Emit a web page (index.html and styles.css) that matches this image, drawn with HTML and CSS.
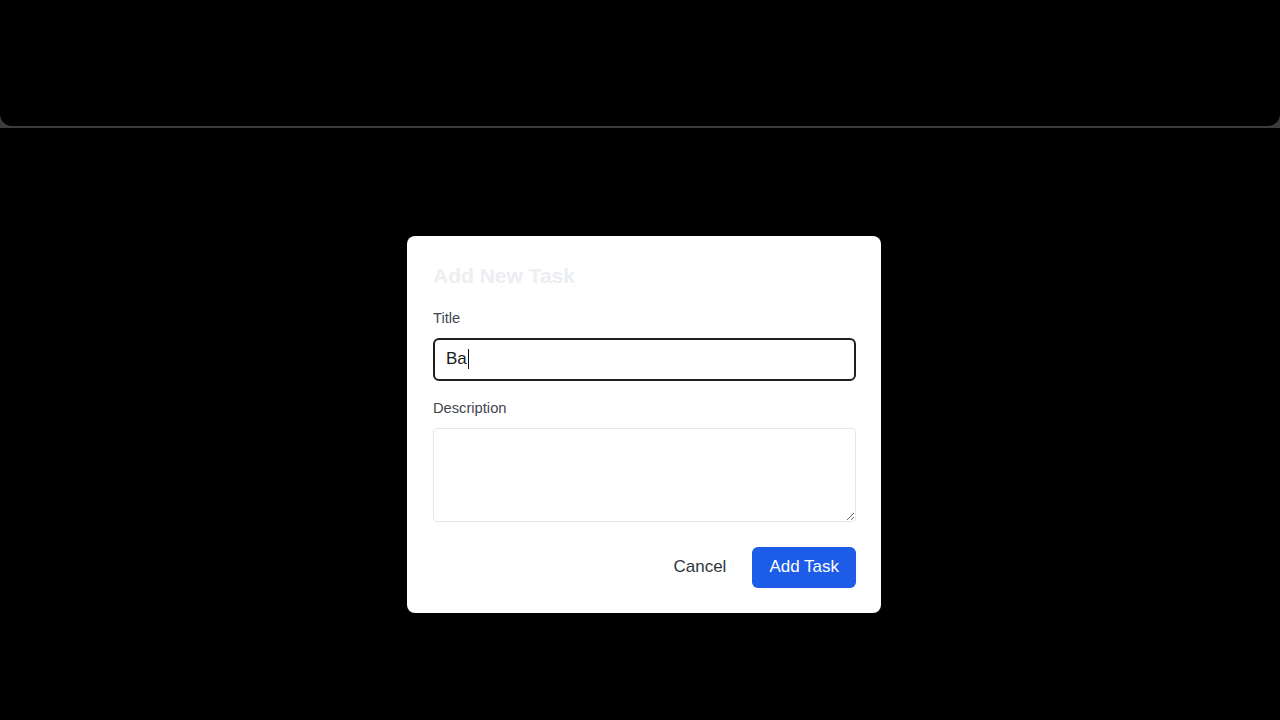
FILE: index.html
```html
<!DOCTYPE html>
<html lang="en">
<head>
<meta charset="utf-8">
<title>Add New Task</title>
<link rel="stylesheet" href="styles.css">
</head>
<body>
<header class="topbar"><div class="topbar-inner"></div></header>
<main class="stage">
  <form class="modal">
    <h2 class="modal-title">Add New Task</h2>
    <label class="field-label">Title</label>
    <div class="text-input"><span class="value">Ba</span><span class="caret"></span></div>
    <label class="field-label">Description</label>
    <textarea class="textarea"></textarea>
    <div class="actions">
      <button type="button" class="btn btn-cancel">Cancel</button>
      <button type="button" class="btn btn-primary">Add Task</button>
    </div>
  </form>
</main>
</body>
</html>
```

FILE: styles.css
```css
* { box-sizing: border-box; }
html, body { margin: 0; height: 100%; }
body {
  background: #000;
  font-family: "Liberation Sans", Arial, sans-serif;
  display: flex;
  flex-direction: column;
}
.topbar {
  height: 128px;
  background: #3c3c3c;
  flex: none;
}
.topbar-inner {
  height: 126px;
  background: #000;
  border-radius: 0 0 12px 12px;
}
.stage {
  flex: 1;
  display: flex;
  align-items: center;
  justify-content: center;
  padding-left: 8px;
}
.modal {
  width: 474px;
  background: #fff;
  border-radius: 8px;
  padding: 26px 25px 25px 26px;
  display: flex;
  flex-direction: column;
}
.modal-title {
  margin: 0 0 18px;
  font-size: 21px;
  line-height: 28px;
  font-weight: 700;
  color: #eceef1;
}
.field-label {
  display: block;
  font-size: 14.7px;
  line-height: 20px;
  color: #3f4650;
  margin-bottom: 10px;
}
.text-input {
  height: 43px;
  border: 2px solid #1e1e1e;
  border-radius: 6px;
  padding: 0 11px;
  display: flex;
  align-items: center;
  font-size: 17px;
  color: #1a1a1a;
  margin-bottom: 17px;
}
.caret {
  width: 1px;
  height: 20px;
  background: #111;
  margin-left: 1px;
}
.textarea {
  display: block;
  width: 100%;
  height: 94px;
  border: 1px solid #e6e8eb;
  border-radius: 4px;
  background: #fff;
  font-family: inherit;
  font-size: 16px;
  margin: 0 0 25px;
  resize: vertical;
}
.actions {
  display: flex;
  justify-content: flex-end;
  gap: 10px;
}
.btn {
  height: 41px;
  border: none;
  border-radius: 6px;
  font-family: inherit;
  font-size: 17px;
  padding: 0 17px;
  cursor: pointer;
}
.btn-cancel {
  background: transparent;
  color: #2f3640;
  padding: 0 16px;
}
.btn-primary {
  background: #1c5ce6;
  color: #fff;
}
```
